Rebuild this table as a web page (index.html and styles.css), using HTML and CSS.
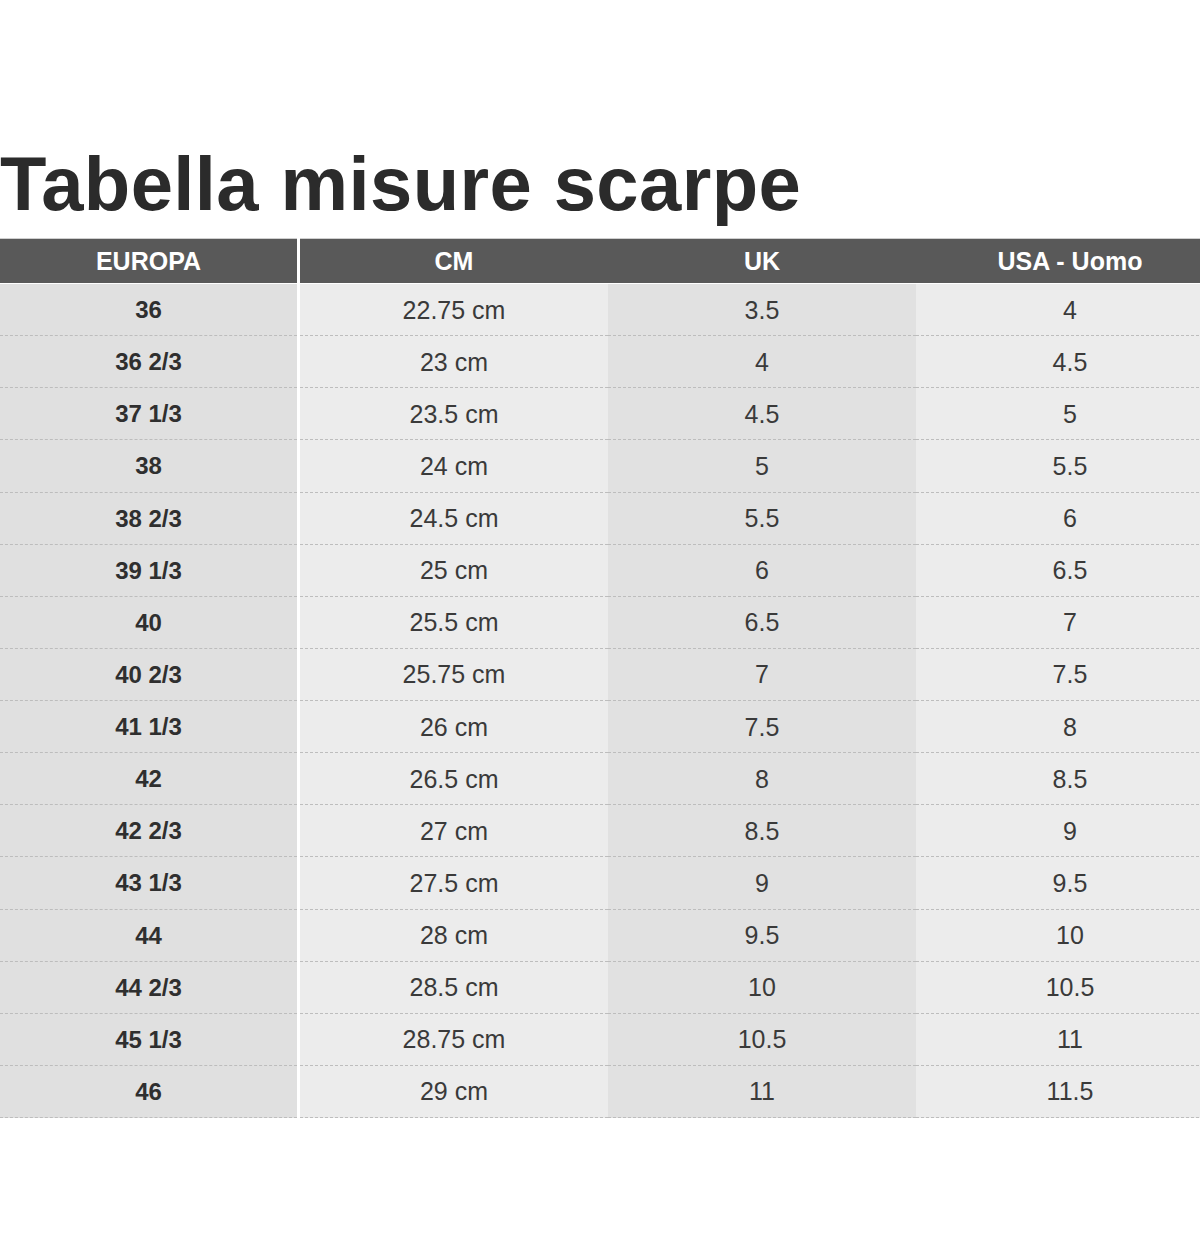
FILE: index.html
```html
<!DOCTYPE html>
<html lang="it">
<head>
<meta charset="utf-8">
<title>Tabella misure scarpe</title>
<link rel="stylesheet" href="styles.css">
</head>
<body>
<div class="page">
  <h1 class="title">Tabella misure scarpe</h1>
  <div class="table-wrap">
    <table class="sizes">
      <thead>
        <tr>
          <th class="c1">EUROPA</th>
          <th class="c2">CM</th>
          <th class="c3">UK</th>
          <th class="c4">USA - Uomo</th>
        </tr>
      </thead>
      <tbody>
        <tr><td class="c1">36</td><td class="c2">22.75 cm</td><td class="c3">3.5</td><td class="c4">4</td></tr>
        <tr><td class="c1">36 2/3</td><td class="c2">23 cm</td><td class="c3">4</td><td class="c4">4.5</td></tr>
        <tr><td class="c1">37 1/3</td><td class="c2">23.5 cm</td><td class="c3">4.5</td><td class="c4">5</td></tr>
        <tr><td class="c1">38</td><td class="c2">24 cm</td><td class="c3">5</td><td class="c4">5.5</td></tr>
        <tr><td class="c1">38 2/3</td><td class="c2">24.5 cm</td><td class="c3">5.5</td><td class="c4">6</td></tr>
        <tr><td class="c1">39 1/3</td><td class="c2">25 cm</td><td class="c3">6</td><td class="c4">6.5</td></tr>
        <tr><td class="c1">40</td><td class="c2">25.5 cm</td><td class="c3">6.5</td><td class="c4">7</td></tr>
        <tr><td class="c1">40 2/3</td><td class="c2">25.75 cm</td><td class="c3">7</td><td class="c4">7.5</td></tr>
        <tr><td class="c1">41 1/3</td><td class="c2">26 cm</td><td class="c3">7.5</td><td class="c4">8</td></tr>
        <tr><td class="c1">42</td><td class="c2">26.5 cm</td><td class="c3">8</td><td class="c4">8.5</td></tr>
        <tr><td class="c1">42 2/3</td><td class="c2">27 cm</td><td class="c3">8.5</td><td class="c4">9</td></tr>
        <tr><td class="c1">43 1/3</td><td class="c2">27.5 cm</td><td class="c3">9</td><td class="c4">9.5</td></tr>
        <tr><td class="c1">44</td><td class="c2">28 cm</td><td class="c3">9.5</td><td class="c4">10</td></tr>
        <tr><td class="c1">44 2/3</td><td class="c2">28.5 cm</td><td class="c3">10</td><td class="c4">10.5</td></tr>
        <tr><td class="c1">45 1/3</td><td class="c2">28.75 cm</td><td class="c3">10.5</td><td class="c4">11</td></tr>
        <tr><td class="c1">46</td><td class="c2">29 cm</td><td class="c3">11</td><td class="c4">11.5</td></tr>
      </tbody>
    </table>
  </div>
</div>
</body>
</html>
```
FILE: styles.css
```css
html, body {
  margin: 0;
  padding: 0;
  background: #ffffff;
  overflow-x: hidden;
}

.page {
  width: 1200px;
  padding-top: 146px;
  font-family: "Liberation Sans", Arial, sans-serif;
  overflow: hidden;
}

.title {
  margin: 0 0 16px 0;
  font-size: 76px;
  line-height: 76px;
  font-weight: bold;
  color: #2b2b2b;
  letter-spacing: 0.4px;
}

.table-wrap {
  width: 1200px;
  overflow: hidden;
}

.sizes {
  border-collapse: collapse;
  border-spacing: 0;
  table-layout: fixed;
  width: 1224px;
}

.sizes th {
  background: #595959;
  color: #ffffff;
  font-size: 25px;
  font-weight: bold;
  height: 44px;
  padding: 0;
  text-align: center;
  vertical-align: middle;
  border-top: 1px solid #cfcfcf;
  border-bottom: 1px solid #ffffff;
}

.sizes td {
  height: 50.13px;
  padding: 1px 0 0 0;
  text-align: center;
  vertical-align: middle;
  font-size: 25px;
  color: #3a3a3a;
  border-bottom: 1px dashed #bdbdbd;
}

.sizes .c1 {
  width: 297px;
  border-right: 3px solid #ffffff;
}

.sizes .c2,
.sizes .c3,
.sizes .c4 {
  width: 308px;
}

.sizes td.c1 {
  background: #e0e0e0;
  font-weight: bold;
  font-size: 24px;
  color: #2f2f2f;
}

.sizes td.c2 {
  background: #ececec;
}

.sizes td.c3 {
  background: #e1e1e1;
}

.sizes td.c4 {
  background: #ececec;
}
```
